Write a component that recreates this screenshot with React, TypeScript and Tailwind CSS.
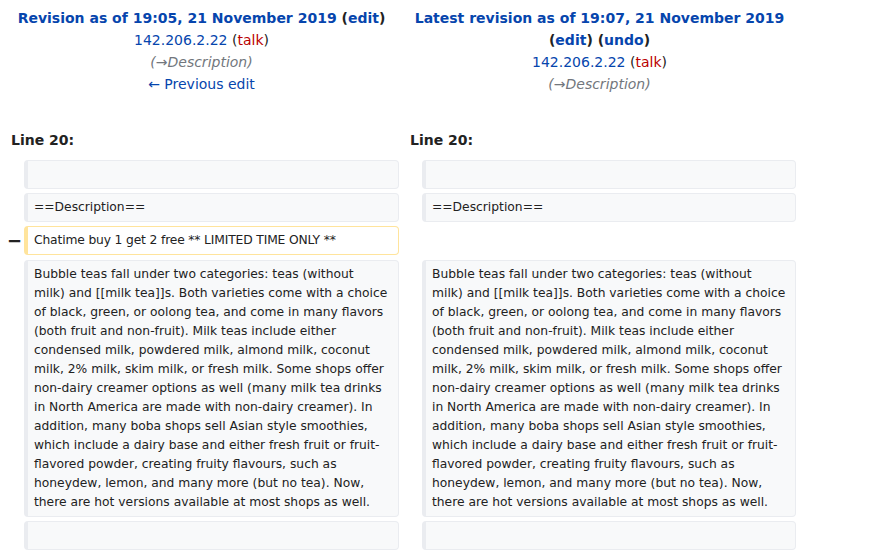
import React from "react";

const link = "text-[#0645ad]";

const bubble = [
  "Bubble teas fall under two categories: teas (without",
  "milk) and [[milk tea]]s. Both varieties come with a choice",
  "of black, green, or oolong tea, and come in many flavors",
  "(both fruit and non-fruit). Milk teas include either",
  "condensed milk, powdered milk, almond milk, coconut",
  "milk, 2% milk, skim milk, or fresh milk. Some shops offer",
  "non-dairy creamer options as well (many milk tea drinks",
  "in North America are made with non-dairy creamer). In",
  "addition, many boba shops sell Asian style smoothies,",
  "which include a dairy base and either fresh fruit or fruit-",
  "flavored powder, creating fruity flavours, such as",
  "honeydew, lemon, and many more (but no tea). Now,",
  "there are hot versions available at most shops as well.",
];

function Context({ children }: { children?: React.ReactNode }) {
  return (
    <div className="min-h-[29px] rounded-[4px] border border-l-4 border-[#eaecf0] bg-[#f8f9fa] px-[6px] py-[4px] text-[12.3px] leading-[19px] whitespace-nowrap">
      {children ?? "\u00a0"}
    </div>
  );
}

function Bubble() {
  return (
    <Context>
      {bubble.map((l, i) => (
        <div key={i}>{l}</div>
      ))}
    </Context>
  );
}

export default function App() {
  return (
    <div className="w-[874px] h-[554px] overflow-hidden bg-white text-[#222] font-['DejaVu_Sans',sans-serif]">
      <div className="grid grid-cols-[16px_375px_15px_374px] gap-x-1 gap-y-1 pl-1 pt-1">
        {/* revision headers */}
        <div className="col-span-2 py-[3px] text-center text-[14px] leading-[22px]">
          <div className="font-bold">
            <span className={link}>Revision as of 19:05, 21 November 2019</span> (
            <span className={link}>edit</span>)
          </div>
          <div>
            <span className={link}>142.206.2.22</span> (<span className="text-[#ba0000]">talk</span>)
          </div>
          <div className="italic text-[#72777d]">(→Description)</div>
          <div className={link}>← Previous edit</div>
        </div>
        <div className="col-span-2 py-[3px] text-center text-[14px] leading-[22px]">
          <div className={`font-bold ${link}`}>Latest revision as of 19:07, 21 November 2019</div>
          <div className="font-bold">
            (<span className={link}>edit</span>) (<span className={link}>undo</span>)
          </div>
          <div>
            <span className={link}>142.206.2.22</span> (<span className="text-[#ba0000]">talk</span>)
          </div>
          <div className="italic text-[#72777d]">(→Description)</div>
        </div>

        {/* line numbers */}
        <div className="col-span-2 mt-[23px] pl-[7px] pt-[4px] pb-[5px] text-[14px] leading-[22px] font-bold">Line 20:</div>
        <div className="col-span-2 mt-[23px] pl-[7px] pt-[4px] pb-[5px] text-[14px] leading-[22px] font-bold">Line 20:</div>

        {/* empty context */}
        <div />
        <Context />
        <div />
        <Context />

        {/* heading */}
        <div />
        <Context>==Description==</Context>
        <div />
        <Context>==Description==</Context>

        {/* deleted line */}
        <div className="-mr-[2px] flex items-center justify-end text-[18px] font-bold leading-none">−</div>
        <div className="min-h-[29px] rounded-[4px] border border-l-4 border-[#ffe49c] bg-white px-[6px] py-[4px] text-[12.3px] leading-[19px] tracking-[-0.15px] whitespace-nowrap">
          Chatime buy 1 get 2 free ** LIMITED TIME ONLY **
        </div>
        <div />
        <div />

        {/* paragraph */}
        <div className="mt-px" />
        <div className="mt-px"><Bubble /></div>
        <div className="mt-px" />
        <div className="mt-px"><Bubble /></div>

        {/* trailing empty */}
        <div />
        <Context />
        <div />
        <Context />
      </div>
    </div>
  );
}
